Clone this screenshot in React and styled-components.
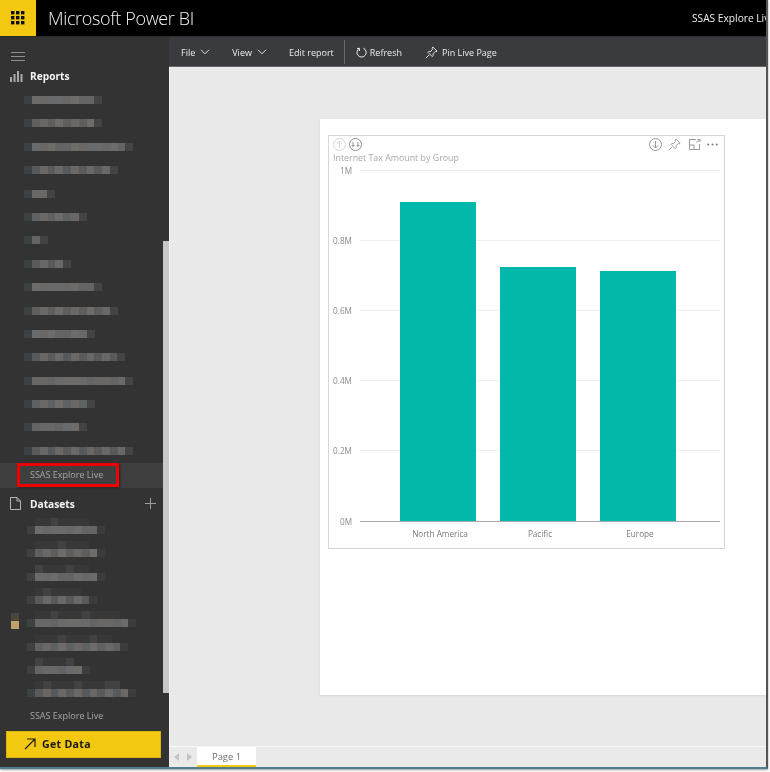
import React from "react";
import styled, { createGlobalStyle } from "styled-components";

const Global = createGlobalStyle`
  html, body { margin: 0; padding: 0; background: #fff; }
  body { font-family: "Open Sans", "Noto Sans", "Liberation Sans", sans-serif; overflow: hidden; }
  * { box-sizing: border-box; }
`;

const Screen = styled.div`
  width: 770px;
  height: 772px;
  background: #fff;
`;
const Frame = styled.div`
  width: 768px;
  height: 769px;
  display: flex;
  flex-direction: column;
  overflow: hidden;
  border-right: 2px solid #555;
  border-bottom: 2px solid #4d7f92;
  background: #333;
  box-shadow: 0 1px 2px #999;
  filter: blur(0.3px);
`;

const Header = styled.header`
  height: 37px;
  flex: none;
  display: flex;
  background: #000;
  border-bottom: 1px solid #2a2a2a;
`;
const AppTile = styled.div`
  width: 36px;
  height: 36px;
  background: #f2c811;
  display: flex;
  align-items: center;
  justify-content: center;
`;
const Brand = styled.div`
  margin-left: 12px;
  color: #f2f2f2;
  font-size: 18px;
  letter-spacing: -0.35px;
  font-weight: 300;
  line-height: 36px;
  white-space: nowrap;
`;
const ReportName = styled.div`
  margin-left: auto;
  width: 74px;
  overflow: hidden;
  white-space: nowrap;
  color: #f0f0f0;
  font-size: 10.2px;
  line-height: 36px;
`;

const Body = styled.div`
  flex: 1;
  min-height: 0;
  display: flex;
`;

const Sidebar = styled.aside`
  position: relative;
  width: 169px;
  flex: none;
  background: #333;
  display: flex;
  flex-direction: column;
`;
const Scrollbar = styled.div`
  position: absolute;
  z-index: 2;
  right: 0;
  top: 204px;
  width: 6px;
  height: 452px;
  background: #c8c8c8;
`;
const MenuButton = styled.div`
  height: 27px;
  padding: 15px 0 0 11px;
  line-height: 0;
`;
const SectionHead = styled.div`
  display: flex;
  align-items: center;
  height: ${(p) => p.$h}px;
  padding: ${(p) => p.$top || 0}px 13px 0 10px;
  color: #f4f4f4;
  font-size: 10.2px;
  font-weight: 700;
`;
const SectionIcon = styled.span`
  width: 20px;
  display: flex;
  align-items: center;
  flex: none;
`;
const HeadAction = styled.span`
  margin-left: auto;
  display: flex;
`;
const NavRow = styled.div`
  position: relative;
  height: 23.4px;
  padding-top: ${(p) => (p.$above ? 0 : 8)}px;
  padding-left: ${(p) => p.$indent}px;
`;
const MarkerSlot = styled.div`
  position: relative;
  height: 0;
`;
const Line = styled.div`
  height: 8px;
`;
const ActiveRow = styled.div`
  position: relative;
  height: 25px;
  margin-top: 0.5px;
  background: #3f3f3f;
  padding-left: 30px;
  color: #a8a8a8;
  font-size: 9px;
  line-height: 24px;
`;
const RedBox = styled.div`
  position: absolute;
  left: 17px;
  top: 0;
  width: 102px;
  height: 24px;
  border: 3px solid #f00000;
  box-shadow: 1px 1px 2px #222;
`;
const Marker = styled.div`
  position: absolute;
  left: 11px;
  top: 103px;
  width: 8px;
  height: 8px;
  background: #c0a06c;
  box-shadow: 0 -8px 0 #4a463c;
`;
const PlainRow = styled.div`
  height: 23px;
  padding-left: 30px;
  color: #a8a8a8;
  font-size: 9px;
  line-height: 22px;
`;
const GetData = styled.button`
  margin: 3px 0 0 6px;
  width: 155px;
  height: 27px;
  background: #f2c811;
  border: 1px solid #d9b40e;
  color: #1a1a1a;
  display: flex;
  align-items: center;
  padding: 0 0 0 17px;
  font-family: inherit;
  font-size: 10.6px;
  font-weight: 700;
  letter-spacing: 0.3px;
  gap: 6px;
`;

const Main = styled.main`
  flex: 1;
  min-width: 0;
  display: flex;
  flex-direction: column;
  background: #e9e9e9;
`;
const Toolbar = styled.nav`
  height: 30px;
  flex: none;
  background: #3a3b3e;
  border-bottom: 1px solid #666;
  display: flex;
  align-items: center;
  padding: 1px 0 0 12px;
  color: #ececec;
  font-size: 9px;
`;
const ToolItem = styled.div`
  display: flex;
  align-items: center;
  gap: ${(p) => p.$gap || 5}px;
  margin-right: ${(p) => p.$after}px;
  white-space: nowrap;
`;
const ToolDivider = styled.div`
  width: 1px;
  height: 24px;
  background: #6a6a6a;
  margin-right: 11px;
`;

const Canvas = styled.div`
  flex: 1;
  min-height: 0;
  padding: 52px 0 0 150px;
  border-left: 1px solid #f4f4f4;
`;
const Page = styled.section`
  height: 576px;
  background: #fff;
  padding: 16px 41px 0 8px;
  box-shadow: 0 1px 2px #d8d8d8;
`;
const Card = styled.article`
  width: 397px;
  height: 414px;
  border: 1px solid #d6d6d6;
  display: flex;
  flex-direction: column;
`;
const VisualBar = styled.div`
  height: 16px;
  flex: none;
  display: flex;
  align-items: center;
  padding: 0 6px 0 4px;
`;
const VisualGroup = styled.div`
  display: flex;
  align-items: center;
  gap: ${(p) => p.$gap}px;
  margin-left: ${(p) => (p.$right ? "auto" : 0)};
`;
const VisualTitle = styled.div`
  height: 13px;
  flex: none;
  margin-left: 4px;
  color: #a9a9a9;
  font-size: 8.85px;
  line-height: 13px;
`;
const Chart = styled.svg`
  display: block;
  flex: none;
  width: 395px;
  height: 383px;
  overflow: visible;
  font-family: "Open Sans", "Noto Sans", "Liberation Sans", sans-serif;
  font-size: 8.2px;
`;

const TabBar = styled.footer`
  height: 21px;
  flex: none;
  background: #eaeaea;
  border-top: 1px solid #f6f6f6;
  display: flex;
  align-items: stretch;
  padding-left: 1px;
`;
const TabArrow = styled.div`
  width: 13px;
  display: flex;
  align-items: center;
  justify-content: center;
`;
const Tab = styled.div`
  margin-left: 1px;
  width: 59px;
  background: #fff;
  border-bottom: 2px solid #f2c811;
  color: #6f6f6f;
  font-size: 9.4px;
  text-align: center;
  line-height: 19px;
`;

const pal = ["#5a5a5a", "#646464", "#5e6263", "#6a6866", "#58595b", "#686a6b", "#605e5c", "#6e6c68"];
const stripe = (w, seed) => {
  const n = Math.ceil(w / 7.8);
  const stops = [];
  for (let i = 0; i < n; i++) {
    const c = pal[(seed * 7 + i * i * 3 + i * seed) % pal.length];
    stops.push(`${c} ${(i * 7.8).toFixed(1)}px ${((i + 1) * 7.8).toFixed(1)}px`);
  }
  return `linear-gradient(90deg, ${stops.join(",")})`;
};

const Mosaic = ({ w, tail, seed }) => (
  <Line style={{
    width: w + 16,
    background: `linear-gradient(90deg, #3c4144 0 8px, transparent 8px ${w + 8}px, ${tail ? "#444" : "#3c3c3c"} ${w + 8}px)`,
  }}>
    <Line style={{ marginLeft: 8, width: w, background: stripe(w, seed) }} />
  </Line>
);

const DimLine = ({ w, seed }) => {
  const n = Math.floor(w / 7.8);
  const stops = [];
  for (let i = 0; i < n; i++) {
    const on = (i * 5 + seed * 3) % 4 === 0;
    stops.push(`${on ? "#424242" : "#383838"} ${(i * 7.8).toFixed(1)}px ${((i + 1) * 7.8).toFixed(1)}px`);
  }
  return <Line style={{ width: w, marginLeft: 8, background: `linear-gradient(90deg, ${stops.join(",")})` }} />;
};

const reports = [62, 62, 93, 78, 15, 47, 8, 31, 62, 78, 55, 85, 93, 55, 47, 93];
const datasets = [62, 62, 62, 54, 93, 85, 47, 93];

const Dots = () => (
  <svg width="14" height="14" viewBox="0 0 14 14" fill="#111">
    {[0, 5, 10].map((y) => [0, 5, 10].map((x) => <rect key={`${x}-${y}`} x={x} y={y} width="3.4" height="3.4" />))}
  </svg>
);
const Chevron = () => (
  <svg width="10" height="6" viewBox="0 0 10 6" fill="none" stroke="#e4e4e4" strokeWidth="1"><path d="M1 .8l4 4 4-4" /></svg>
);
const PinGlyph = ({ color = "#eee", size = 13 }) => (
  <svg width={size} height={size} viewBox="0 0 14 14" fill="none" stroke={color} strokeWidth="1">
    <path d="M8.4 1l4.6 4.6-1 .6-1-.2-2.4 2.4.2 2-1 1-4.6-4.6 1-1 2 .2L8 3.6l-.2-1z" /><path d="M4.4 9.6L.8 13.2" />
  </svg>
);

export default function App() {
  return (
    <Screen>
      <Global />
      <Frame>
        <Header>
          <AppTile><Dots /></AppTile>
          <Brand>Microsoft Power BI</Brand>
          <ReportName>SSAS Explore Live</ReportName>
        </Header>
        <Body>
          <Sidebar>
            <Scrollbar />
            <MenuButton>
              <svg width="14" height="9" viewBox="0 0 14 9" stroke="#8f8f8f" strokeWidth="1"><path d="M0 .5h14M0 4.5h14M0 8.5h14" /></svg>
            </MenuButton>
            <SectionHead $h={24}>
              <SectionIcon>
                <svg width="13" height="12" viewBox="0 0 13 12" fill="#a9a9a9"><rect x="0" y="7" width="2" height="5" /><rect x="3.5" y="4" width="2" height="8" /><rect x="7" y="1" width="2" height="11" /><rect x="10.5" y="4" width="2" height="8" /></svg>
              </SectionIcon>
              Reports
            </SectionHead>
            {reports.map((w, i) => (
              <NavRow key={i} $indent={24}>
                <Mosaic w={w} tail seed={i + 1} />
              </NavRow>
            ))}
            <ActiveRow>
              SSAS Explore Live
              <RedBox />
            </ActiveRow>
            <SectionHead $h={30} $top={2}>
              <SectionIcon>
                <svg width="11" height="13" viewBox="0 0 11 13" fill="none" stroke="#b4b4b4" strokeWidth="1"><path d="M.5.5h6.5l3.5 3.5v8.500H.5zM7 .5V4h3.500" /></svg>
              </SectionIcon>
              Datasets
              <HeadAction>
                <svg width="11" height="11" viewBox="0 0 11 11" stroke="#9c9c9c" strokeWidth="1"><path d="M5.500 0v11M0 5.500h11" /></svg>
              </HeadAction>
            </SectionHead>
            <MarkerSlot><Marker /></MarkerSlot>
            {datasets.map((w, i) => (
              <NavRow key={i} $indent={27} $above>
                <DimLine w={w - 8} seed={i + 2} />
                <Mosaic w={w} seed={i + 9} />
              </NavRow>
            ))}
            <PlainRow>SSAS Explore Live</PlainRow>
            <GetData>
              <svg width="12" height="12" viewBox="0 0 12 12" fill="none" stroke="#1a1a1a" strokeWidth="1.2"><path d="M1 11L11 1M3 1h8v8" /></svg>
              Get Data
            </GetData>
          </Sidebar>
          <Main>
            <Toolbar>
              <ToolItem $after={22}>File <Chevron /></ToolItem>
              <ToolItem $after={22}>View <Chevron /></ToolItem>
              <ToolItem $after={10}>Edit report</ToolItem>
              <ToolDivider />
              <ToolItem $after={23} $gap={3}>
                <svg width="11" height="11" viewBox="0 0 11 11" fill="none" stroke="#eee" strokeWidth="1"><path d="M3.400 1.400A4.600 4.600 0 1 0 7.400 1.200M3.400 1.400V4M1 1.400h2.400" /></svg>
                Refresh
              </ToolItem>
              <ToolItem $after={0} $gap={4}><PinGlyph />Pin Live Page</ToolItem>
            </Toolbar>
            <Canvas>
              <Page>
                <Card>
                  <VisualBar>
                    <VisualGroup $gap={3}>
                      <svg width="13" height="13" viewBox="0 0 13 13" fill="none" stroke="#d4d4d4"><circle cx="6.500" cy="6.500" r="6" /><path d="M6.500 10V3M3.800 5.700l2.700-2.700 2.700 2.700" /></svg>
                      <svg width="13" height="13" viewBox="0 0 13 13" fill="none" stroke="#8f8f8f"><circle cx="6.500" cy="6.500" r="6" /><path d="M4 4v4.500M2.600 7l1.400 1.500L5.400 7M9 4v4.500M7.600 7L9 8.500 10.400 7" /></svg>
                    </VisualGroup>
                    <VisualGroup $right $gap={6}>
                      <svg width="13" height="13" viewBox="0 0 13 13" fill="none" stroke="#999"><circle cx="6.500" cy="6.500" r="6" /><path d="M6.500 3v7M3.800 7.300l2.700 2.700 2.700-2.700" /></svg>
                      <PinGlyph color="#999" />
                      <svg width="12" height="11" viewBox="0 0 12 11" fill="none" stroke="#999" style={{ marginLeft: 2 }}><path d="M7 .5H.5v10h10V5M.5 6h4.500v4.500M7.500 3.500L11 .5M8.500.5H11V3" /></svg>
                      <svg width="11" height="3" viewBox="0 0 11 3" fill="#777"><circle cx="1.200" cy="1.500" r="1" /><circle cx="5.500" cy="1.500" r="1" /><circle cx="9.800" cy="1.500" r="1" /></svg>
                    </VisualGroup>
                  </VisualBar>
                  <VisualTitle>Internet Tax Amount by Group</VisualTitle>
                  <Chart viewBox="329 165 395 383">
                    {[[170, "1M"], [240, "0.8M"], [310, "0.6M"], [380, "0.4M"], [450, "0.2M"]].map(([y, t]) => (
                      <g key={t}>
                        <line x1="360" x2="720" y1={y + 0.5} y2={y + 0.5} stroke="#eeeeee" />
                        <text x="352" y={y + 3.5} textAnchor="end" fill="#8a8a8a">{t}</text>
                      </g>
                    ))}
                    <rect x="400" y="202" width="76" height="319" fill="#01b8aa" />
                    <rect x="500" y="267" width="76" height="254" fill="#01b8aa" />
                    <rect x="600" y="271" width="76" height="250" fill="#01b8aa" />
                    <line x1="360" x2="720" y1="521.500" y2="521.500" stroke="#aaaaaa" />
                    <text x="352" y="524.500" textAnchor="end" fill="#8a8a8a">0M</text>
                    <text x="440" y="537" textAnchor="middle" fill="#7a7a7a">North America</text>
                    <text x="540" y="537" textAnchor="middle" fill="#7a7a7a">Pacific</text>
                    <text x="640" y="537" textAnchor="middle" fill="#7a7a7a">Europe</text>
                  </Chart>
                </Card>
              </Page>
            </Canvas>
            <TabBar>
              <TabArrow><svg width="5" height="8" viewBox="0 0 5 8" fill="#c4c4c4"><path d="M5 0v8L0 4z" /></svg></TabArrow>
              <TabArrow><svg width="5" height="8" viewBox="0 0 5 8" fill="#c4c4c4"><path d="M0 0v8l5-4z" /></svg></TabArrow>
              <Tab>Page 1</Tab>
            </TabBar>
          </Main>
        </Body>
      </Frame>
    </Screen>
  );
}
